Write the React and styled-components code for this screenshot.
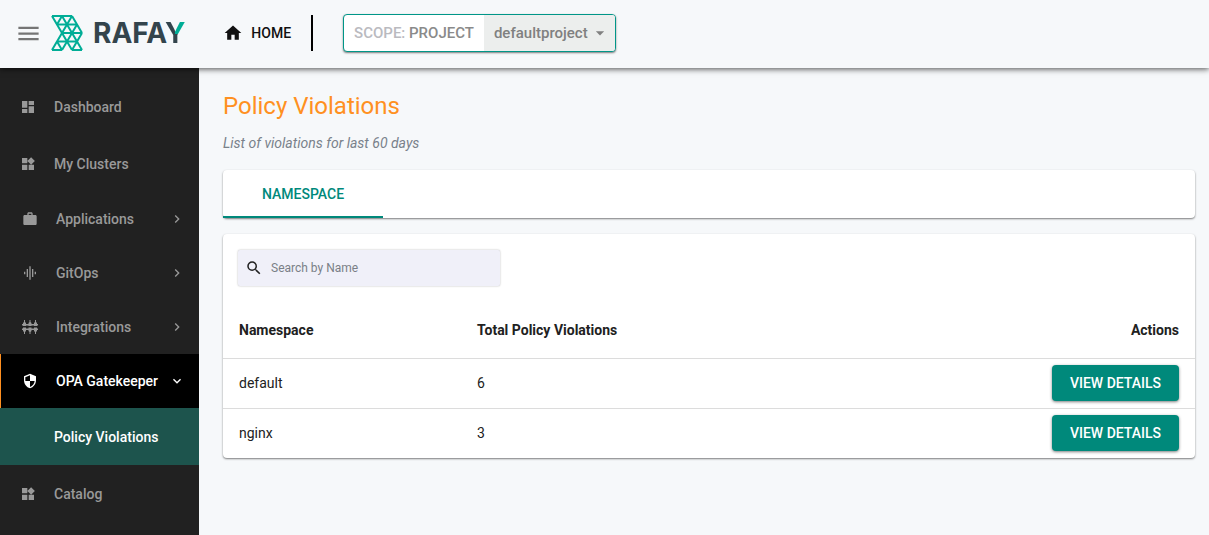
import React from 'react';
import styled, { createGlobalStyle } from 'styled-components';
import {
  MdArrowDropDown,
  MdChevronRight,
  MdDashboard,
  MdExpandMore,
  MdGraphicEq,
  MdHome,
  MdMenu,
  MdSearch,
  MdSecurity,
  MdWidgets,
  MdWork,
} from 'react-icons/md';

const navItems = [
  { label: 'Dashboard', icon: MdDashboard },
  { label: 'My Clusters', icon: MdWidgets },
  { label: 'Applications', icon: MdWork, group: true },
  { label: 'GitOps', icon: MdGraphicEq, group: true },
  { label: 'Integrations', icon: FenceIcon, group: true },
  { label: 'OPA Gatekeeper', icon: MdSecurity, group: true, open: true },
  { label: 'Policy Violations', child: true },
  { label: 'Catalog', icon: MdWidgets },
];

const rows = [
  { namespace: 'default', total: 6 },
  { namespace: 'nginx', total: 3 },
];

function FenceIcon() {
  return (
    <svg width="16" height="16" viewBox="0 0 16 16" fill="currentColor" aria-hidden="true">
      <path d="M0 5h16v1.500H0zM0 9.500h16V11H0z" />
      <path d="M2 1h1v2l1 1v3H1V4l1-1zM1 8.500h3V12l-1 1v2H2v-2l-1-1z" />
      <path d="M7.500 1h1v2l1 1v3h-3V4l1-1zM6.500 8.500h3V12l-1 1v2h-1v-2l-1-1z" />
      <path d="M13 1h1v2l1 1v3h-3V4l1-1zM12 8.500h3V12l-1 1v2h-1v-2l-1-1z" />
    </svg>
  );
}

function LogoMark() {
  return (
    <svg width="32" height="36" viewBox="0 0 32 36" fill="none" stroke="#00ad96" strokeWidth="2" strokeLinejoin="round" aria-hidden="true">
      <path d="M1 1H21M6 9.500H26M11 18H31M6 26.500H26M1 35H11M21 35H31" />
      <path d="M1 1L21 35M11 1L31 35M21 1L31 18M6 26.500L11 35" />
      <path d="M11 1L6 9.500M21 1L1 35M26 9.500L11 35M31 18L21 35" />
    </svg>
  );
}

function App() {
  return (
    <Page>
      <GlobalStyle />
      <Header>
        <MenuButton aria-label="Toggle menu"><MdMenu /></MenuButton>
        <Logo href="#" aria-label="Rafay">
          <LogoMark />
          <LogoText>RAFA<LogoTip>Y</LogoTip></LogoText>
        </Logo>
        <HomeLink href="#"><MdHome />HOME</HomeLink>
        <Divider />
        <Scope>
          <ScopeLabel htmlFor="project"><span>SCOPE:</span> PROJECT</ScopeLabel>
          <SelectWrapper>
            <Select id="project" defaultValue="defaultproject">
              <option>defaultproject</option>
            </Select>
            <MdArrowDropDown />
          </SelectWrapper>
        </Scope>
      </Header>

      <Body>
        <Sidebar>
          {navItems.map(({ label, icon: Icon, group, open, child }) => (
            <NavItem key={label} href="#" $group={group} $open={open} $child={child}>
              <NavIcon>{Icon && <Icon />}</NavIcon>
              <NavLabel>{label}</NavLabel>
              {group && (open ? <MdExpandMore /> : <MdChevronRight />)}
            </NavItem>
          ))}
        </Sidebar>

        <Main>
          <Title>Policy Violations</Title>
          <Subtitle>List of violations for last 60 days</Subtitle>
          <Tabs role="tablist">
            <Tab role="tab" aria-selected="true">NAMESPACE</Tab>
          </Tabs>
          <Card>
            <SearchBox>
              <MdSearch />
              <SearchInput type="text" placeholder="Search by Name" aria-label="Search by Name" />
            </SearchBox>
            <Table>
              <thead>
                <tr>
                  <HeadCell $width="238px">Namespace</HeadCell>
                  <HeadCell>Total Policy Violations</HeadCell>
                  <HeadCell $right>Actions</HeadCell>
                </tr>
              </thead>
              <tbody>
                {rows.map((row) => (
                  <tr key={row.namespace}>
                    <Cell>{row.namespace}</Cell>
                    <Cell>{row.total}</Cell>
                    <Cell $right><Button>VIEW DETAILS</Button></Cell>
                  </tr>
                ))}
              </tbody>
            </Table>
          </Card>
        </Main>
      </Body>
    </Page>
  );
}

const GlobalStyle = createGlobalStyle`
  * {
    box-sizing: border-box;
  }

  body {
    margin: 0;
    background-color: #f6f8fa;
    color: #212121;
    font-family: Roboto, sans-serif;
    font-size: 14px;
  }

  button, input, select {
    font-family: inherit;
  }

  a {
    color: inherit;
    text-decoration: none;
  }
`

const Page = styled.div`
  display: flex;
  flex-direction: column;
  min-height: 100vh;
`

const Header = styled.header`
  display: flex;
  align-items: center;
  height: 68px;
  padding: 0 15px 2px;
  background-color: #f6f8fa;
  box-shadow: 0 1px 6px rgba(0, 0, 0, 0.7);
  z-index: 1;
`

const MenuButton = styled.button`
  display: flex;
  padding: 0;
  border: none;
  background: none;
  color: #757575;

  svg {
    width: 27px;
    height: 27px;
  }
`

const Logo = styled.a`
  display: flex;
  align-items: center;
  margin-left: 9px;
`

const LogoText = styled.span`
  margin-left: 10px;
  color: #33444c;
  font-family: Inter, sans-serif;
  font-size: 28px;
  font-weight: 700;
  line-height: 32px;
`

const LogoTip = styled.span`
  background: conic-gradient(from 0deg at 50% 54%, #00ad96 90deg, #33444c 90deg);
  background-clip: text;
  color: transparent;
`

const HomeLink = styled.a`
  display: flex;
  align-items: center;
  gap: 8px;
  margin-left: 38px;
  color: #111111;
  font-weight: 500;

  svg {
    width: 20px;
    height: 20px;
  }
`

const Divider = styled.div`
  width: 2px;
  height: 36px;
  margin: 0 30px 0 20px;
  background-color: #000000;
`

const Scope = styled.div`
  display: flex;
  height: 38px;
  border: 1px solid #009688;
  border-radius: 4px;
  background-color: #ffffff;
  box-shadow: 0 1px 2px rgba(0, 0, 0, 0.5);
  overflow: hidden;
`

const ScopeLabel = styled.label`
  padding: 0 10px;
  color: #8a8a8a;
  font-size: 15px;
  font-weight: 500;
  line-height: 36px;

  span {
    color: #bababf;
  }
`

const SelectWrapper = styled.div`
  display: flex;
  align-items: center;
  background-color: #eceeed;
  color: #808080;

  svg {
    width: 20px;
    height: 20px;
    margin: 0 5px 0 -20px;
    pointer-events: none;
  }
`

const Select = styled.select`
  appearance: none;
  height: 36px;
  padding: 0 22px 0 10px;
  border: none;
  background: none;
  color: #808080;
  font-size: 15px;
  font-weight: 500;
`

const Body = styled.div`
  display: flex;
  flex: 1;
`

const Sidebar = styled.nav`
  flex: none;
  width: 199px;
  padding-top: 10px;
  background-color: #212121;
`

const NavItem = styled.a`
  display: flex;
  align-items: center;
  height: ${(props) => (props.$group ? '54px' : '57px')};
  padding: 0 14px 0 ${(props) => (props.$group ? '22px' : '20px')};
  background-color: ${(props) => (props.$open ? '#000000' : props.$child ? '#1d544d' : 'transparent')};
  box-shadow: ${(props) => (props.$open ? 'inset 1px 0 #ff9021' : 'none')};
  color: ${(props) => (props.$open || props.$child ? '#ffffff' : '#999999')};
  font-weight: 500;

  > svg {
    width: 16px;
    height: 16px;
  }
`

const NavIcon = styled.span`
  display: flex;
  justify-content: center;
  width: 16px;
  margin-right: 18px;

  svg {
    width: 16px;
    height: 16px;
  }
`

const NavLabel = styled.span`
  flex: 1;
  white-space: nowrap;
`

const Main = styled.main`
  flex: 1;
  min-width: 0;
  padding: 24px 14px 24px 24px;
`

const Title = styled.h1`
  margin: 0;
  color: #ff9021;
  font-size: 24px;
  font-weight: 400;
  line-height: 28px;
`

const Subtitle = styled.p`
  margin: 12px 0 16px;
  color: #79818a;
  font-style: italic;
  line-height: 22px;
`

const Tabs = styled.div`
  height: 48px;
  border-radius: 4px;
  background-color: #ffffff;
  box-shadow: 0 1px 2px rgba(0, 0, 0, 0.5);
`

const Tab = styled.button`
  width: 160px;
  height: 48px;
  padding: 0;
  border: none;
  box-shadow: inset 0 -2px #00897b;
  background: none;
  color: #00897b;
  font-size: 14px;
  font-weight: 500;
`

const Card = styled.section`
  margin-top: 16px;
  padding-top: 16px;
  border-radius: 4px;
  background-color: #ffffff;
  box-shadow: 0 1px 2px rgba(0, 0, 0, 0.5);
`

const SearchBox = styled.div`
  display: flex;
  align-items: center;
  gap: 8px;
  width: 262px;
  height: 36px;
  margin-left: 15px;
  padding: 0 7px;
  border-radius: 2px;
  background-color: #f0f0f9;
  box-shadow: 0 0 2px rgba(0, 0, 0, 0.3);

  svg {
    width: 18px;
    height: 18px;
  }
`

const SearchInput = styled.input`
  flex: 1;
  min-width: 0;
  padding: 0;
  border: none;
  outline: none;
  background: none;
  font-size: 12px;

  &::placeholder {
    color: #7a7f87;
  }
`

const Table = styled.table`
  width: 100%;
  margin-top: 16px;
  border-collapse: collapse;
`

const HeadCell = styled.th`
  width: ${(props) => props.$width || 'auto'};
  height: 56px;
  padding: 0 16px;
  text-align: ${(props) => (props.$right ? 'right' : 'left')};
  font-weight: 700;
`

const Cell = styled.td`
  height: 50px;
  padding: 0 16px;
  border-top: 1px solid #dcdcdc;
  text-align: ${(props) => (props.$right ? 'right' : 'left')};
`

const Button = styled.button`
  height: 36px;
  padding: 0 18px;
  border: none;
  border-radius: 4px;
  background-color: #00897b;
  box-shadow: 0 1px 3px rgba(0, 0, 0, 0.5);
  color: #ffffff;
  font-size: 14px;
  font-weight: 500;
`

export default App;
